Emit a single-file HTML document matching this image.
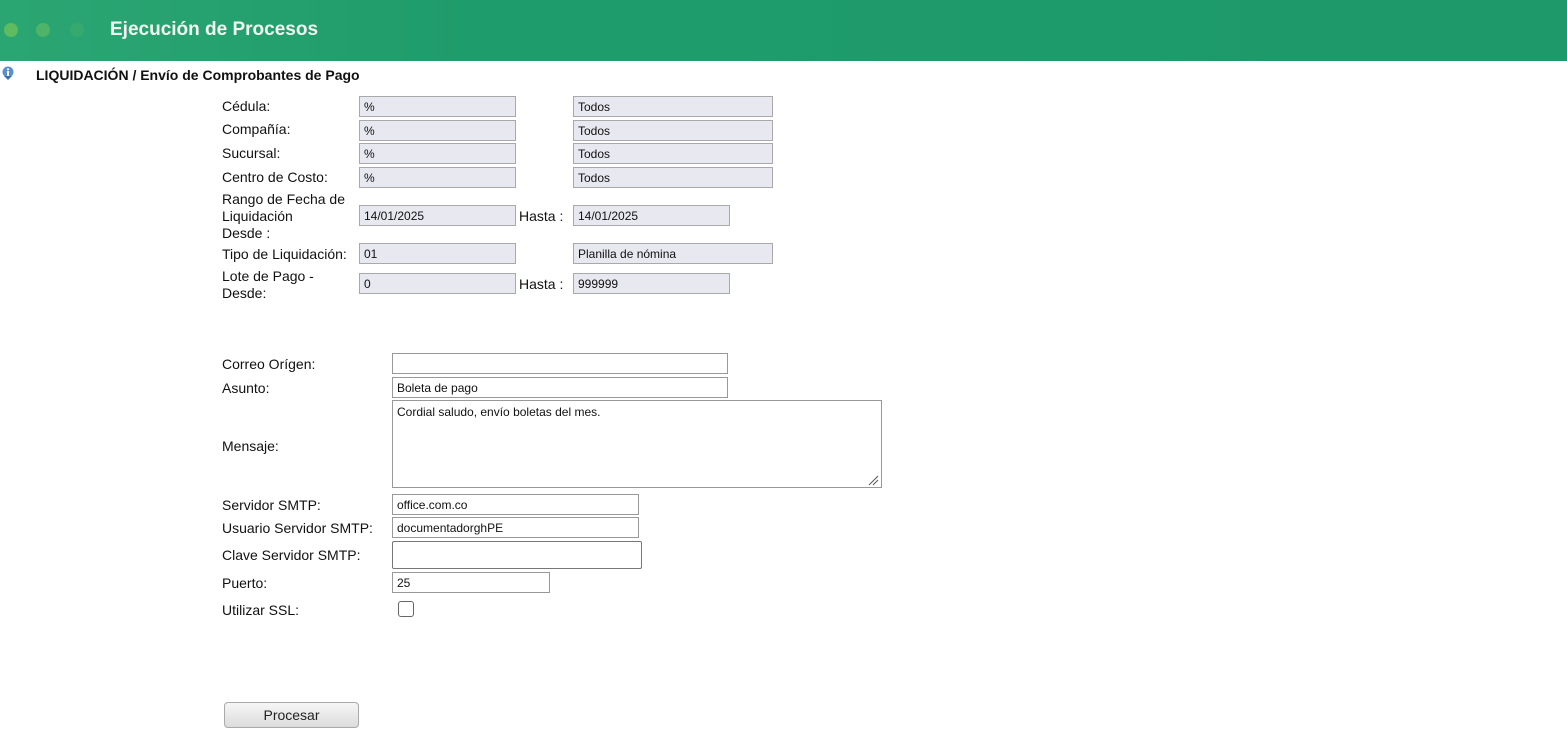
<!DOCTYPE html>
<html><head><meta charset="utf-8"><style>
body{margin:0;width:1567px;height:739px;position:relative;background:#fff;font-family:"Liberation Sans",Arial,sans-serif;overflow:hidden}
.hdr{position:absolute;left:0;top:0;width:1567px;height:61px;background:linear-gradient(90deg,#2ba673 0%,#1f9c6b 30%,#1e9a6a 100%)}
.dot{position:absolute;top:23px;width:14px;height:14px;border-radius:50%}
.t{position:absolute;left:110px;top:19px;color:#f2f7f2;font-weight:bold;font-size:19px}
.l{position:absolute;font-size:14px;color:#111;line-height:17px}
.i{position:absolute;box-sizing:border-box;border:1px solid #a9a9a9;background:#e8e8f0;font-size:12px;padding:4px 4px 2px;height:21px;line-height:13px;color:#111}
.w{background:#fff;border-color:#999}
</style></head><body>
<div class="hdr">
<div class="dot" style="left:4px;background:#6cc05a;opacity:.8"></div>
<div class="dot" style="left:36px;background:#5fbb62;opacity:.7"></div>
<div class="dot" style="left:70px;background:#3fae6c;opacity:.6"></div>
<div class="t">Ejecución de Procesos</div></div>
<svg style="position:absolute;left:1px;top:66px" width="14" height="14" viewBox="0 0 14 14"><circle cx="7" cy="6" r="5.5" fill="#5a8fd0"/><rect x="6" y="5" width="2" height="5" fill="#fff"/><rect x="6" y="2.5" width="2" height="1.6" fill="#fff"/><path d="M3 10 L7 14 L11 10Z" fill="#3a6fb0"/></svg>
<div class="l" style="left:36px;top:67px;font-weight:bold;font-size:14px">LIQUIDACIÓN / Envío de Comprobantes de Pago</div>

<div class="l" style="left:222px;top:98px">Cédula:</div>
<div class="i" style="left:359px;top:96px;width:157px">%</div><div class="i" style="left:573px;top:96px;width:200px">Todos</div>
<div class="l" style="left:222px;top:121px">Compañía:</div>
<div class="i" style="left:359px;top:120px;width:157px">%</div><div class="i" style="left:573px;top:120px;width:200px">Todos</div>
<div class="l" style="left:222px;top:145px">Sucursal:</div>
<div class="i" style="left:359px;top:143px;width:157px">%</div><div class="i" style="left:573px;top:143px;width:200px">Todos</div>
<div class="l" style="left:222px;top:169px">Centro de Costo:</div>
<div class="i" style="left:359px;top:167px;width:157px">%</div><div class="i" style="left:573px;top:167px;width:200px">Todos</div>
<div class="l" style="left:222px;top:191px">Rango de Fecha de<br>Liquidación<br>Desde :</div>
<div class="i" style="left:359px;top:205px;width:157px">14/01/2025</div>
<div class="l" style="left:519px;top:208px">Hasta :</div>
<div class="i" style="left:573px;top:205px;width:157px">14/01/2025</div>
<div class="l" style="left:222px;top:246px">Tipo de Liquidación:</div>
<div class="i" style="left:359px;top:243px;width:157px">01</div><div class="i" style="left:573px;top:243px;width:200px">Planilla de nómina</div>
<div class="l" style="left:222px;top:268px">Lote de Pago -<br>Desde:</div>
<div class="i" style="left:359px;top:273px;width:157px">0</div>
<div class="l" style="left:519px;top:276px">Hasta :</div>
<div class="i" style="left:573px;top:273px;width:157px">999999</div>

<div class="l" style="left:222px;top:356px">Correo Orígen:</div>
<div class="i w" style="left:392px;top:353px;width:336px"></div>
<div class="l" style="left:222px;top:380px">Asunto:</div>
<div class="i w" style="left:392px;top:377px;width:336px">Boleta de pago</div>
<div class="l" style="left:222px;top:438px">Mensaje:</div>
<div class="i w" style="left:392px;top:400px;width:490px;height:88px;padding-top:5px">Cordial saludo, envío boletas del mes.</div>
<svg style="position:absolute;left:867px;top:474px" width="12" height="12"><path d="M2 11 L11 2 M6 11 L11 6" stroke="#555" stroke-width="1"/></svg>
<div class="l" style="left:222px;top:497px">Servidor SMTP:</div>
<div class="i w" style="left:392px;top:494px;width:247px">office.com.co</div>
<div class="l" style="left:222px;top:520px">Usuario Servidor SMTP:</div>
<div class="i w" style="left:392px;top:517px;width:247px">documentadorghPE</div>
<div class="l" style="left:222px;top:547px">Clave Servidor SMTP:</div>
<div class="i w" style="left:392px;top:541px;width:250px;height:28px;border-color:#777;border-radius:2px"></div>
<div class="l" style="left:222px;top:575px">Puerto:</div>
<div class="i w" style="left:392px;top:572px;width:158px">25</div>
<div class="l" style="left:222px;top:602px">Utilizar SSL:</div>
<div style="position:absolute;left:398px;top:601px;width:14px;height:14px;border:1px solid #666;border-radius:3px;background:#fff"></div>
<div style="position:absolute;left:224px;top:702px;width:133px;height:24px;border:1px solid #aaa;border-radius:4px;background:linear-gradient(#f6f6f6,#dcdcdc);font-size:14px;text-align:center;line-height:24px;color:#222">Procesar</div>
</body></html>
